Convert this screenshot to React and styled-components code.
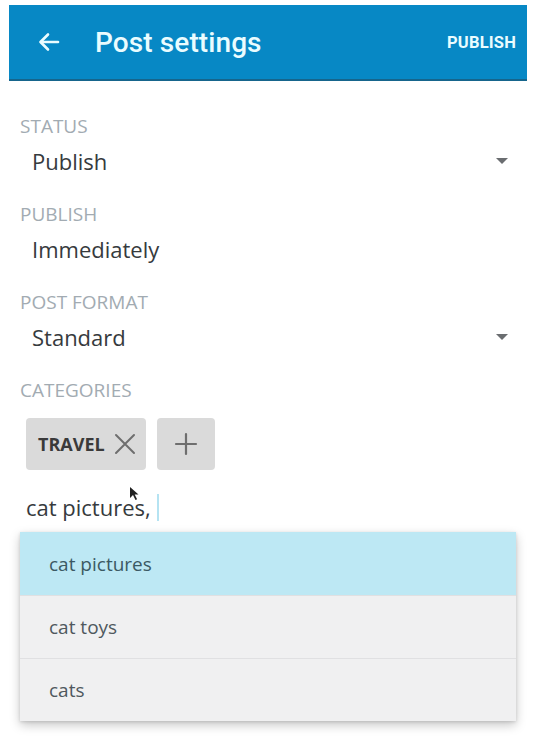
import styled, { createGlobalStyle } from 'styled-components'

const GlobalStyle = createGlobalStyle`
  html, body {
    margin: 0;
    padding: 0;
    background: #ffffff;
  }
  body {
    font-family: "Open Sans", "Noto Sans", sans-serif;
  }
`

const Page = styled.div`
  width: 540px;
  height: 741px;
  position: relative;
  overflow: hidden;
  background: #fff;
`

const TopBar = styled.header`
  margin: 5px 13px 0 9px;
  height: 74px;
  background: #0788c5;
  border-bottom: 2px solid #16658c;
  display: flex;
  align-items: center;
  padding: 0 11px 0 27px;
  font-family: Roboto, "Noto Sans", sans-serif;
  color: #eafcff;
`

const BackButton = styled.button`
  background: none;
  border: 0;
  padding: 0;
  width: 26px;
  height: 26px;
  display: flex;
  align-items: center;
  justify-content: center;
  margin-right: 33px;
  color: inherit;
`

const Title = styled.h1`
  margin: 0;
  flex: 1;
  font-size: 28px;
  font-weight: 500;
  letter-spacing: 0.1px;
`

const Action = styled.span`
  font-size: 16.5px;
  font-weight: 700;
  letter-spacing: 0.2px;
`

const Content = styled.main`
  padding: 33px 24px 0 20px;
`

const Section = styled.section`
  margin-bottom: 25px;
`

const Label = styled.div`
  font-size: 19px;
  line-height: 24px;
  color: #a2abb2;
  margin-bottom: 7px;
`

const ValueRow = styled.div`
  display: flex;
  align-items: center;
  justify-content: space-between;
  height: 32px;
  padding-left: 12px;
  padding-right: 8px;
  font-size: 22px;
  color: #363a3d;
`

const Caret = styled.span`
  width: 0;
  height: 0;
  border-left: 6px solid transparent;
  border-right: 6px solid transparent;
  border-top: 6px solid #6a6d70;
`

const Chips = styled.div`
  display: flex;
  gap: 11px;
  margin: 16px 0 0 6px;
`

const Chip = styled.div`
  height: 52px;
  display: flex;
  align-items: center;
  justify-content: center;
  gap: 9px;
  padding: 0 ${p => (p.$square ? '0' : '10px 0 12px')};
  width: ${p => (p.$square ? '58px' : 'auto')};
  background: #dadada;
  border-radius: 4px;
  font-size: 18px;
  font-weight: 700;
  color: #3a3a3a;
`

const Input = styled.div`
  position: relative;
  display: flex;
  align-items: center;
  height: 32px;
  margin: 21px 0 0 6px;
  font-size: 22px;
  color: #363a3d;
`

const Cursor = styled.span`
  width: 2px;
  height: 27px;
  margin-left: 6px;
  background: #b5e3f2;
`

const Pointer = styled.svg`
  position: absolute;
  left: 103px;
  top: -5px;
`

const Suggestions = styled.ul`
  list-style: none;
  margin: 9px 24px 0 20px;
  padding: 0;
  background: #f0f0f1;
  box-shadow: 0 4px 10px rgba(0, 0, 0, 0.22), 0 1px 3px rgba(0, 0, 0, 0.12);
`

const Suggestion = styled.li`
  height: 63px;
  box-sizing: border-box;
  display: flex;
  align-items: center;
  padding-left: 29px;
  font-size: 19px;
  color: ${p => (p.$active ? '#3b5963' : '#4f585e')};
  background: ${p => (p.$active ? '#bde8f4' : '#f0f0f1')};
  border-top: ${p => (p.$first ? '0' : '1px solid #e0e0e2')};
`

const fields = [
  { label: 'STATUS', value: 'Publish', select: true },
  { label: 'PUBLISH', value: 'Immediately' },
  { label: 'POST FORMAT', value: 'Standard', select: true },
]

const options = ['cat pictures', 'cat toys', 'cats']

export default function App() {
  return (
    <Page>
      <GlobalStyle />
      <TopBar>
        <BackButton aria-label="Back">
          <svg width="24" height="24" viewBox="0 0 24 24" fill="none" stroke="currentColor" strokeWidth="2.6" strokeLinecap="round" strokeLinejoin="round">
            <path d="M21 12H4" />
            <path d="M11 4.5 3.5 12l7.5 7.5" />
          </svg>
        </BackButton>
        <Title>Post settings</Title>
        <Action>PUBLISH</Action>
      </TopBar>

      <Content>
        {fields.map(f => (
          <Section key={f.label}>
            <Label>{f.label}</Label>
            <ValueRow>
              <span>{f.value}</span>
              {f.select && <Caret />}
            </ValueRow>
          </Section>
        ))}

        <Label>CATEGORIES</Label>
        <Chips>
          <Chip>
            TRAVEL
            <svg width="22" height="22" viewBox="0 0 22 22" stroke="#6e6e6e" strokeWidth="2" strokeLinecap="round">
              <path d="M2 2 20 20M20 2 2 20" />
            </svg>
          </Chip>
          <Chip $square>
            <svg width="24" height="24" viewBox="0 0 24 24" stroke="#6e6e6e" strokeWidth="2.2" strokeLinecap="round">
              <path d="M12 2v20M2 12h20" />
            </svg>
          </Chip>
        </Chips>

        <Input>
          cat pictures,
          <Cursor />
          <Pointer width="10" height="15" viewBox="0 0 10 15">
            <path d="M1 1v11l3-3 2.5 5 1.6-.8-2.4-4.8H9.5z" fill="#222" />
          </Pointer>
        </Input>
      </Content>

      <Suggestions>
        {options.map((o, i) => (
          <Suggestion key={o} $active={i === 0} $first={i === 0}>
            {o}
          </Suggestion>
        ))}
      </Suggestions>
    </Page>
  )
}
